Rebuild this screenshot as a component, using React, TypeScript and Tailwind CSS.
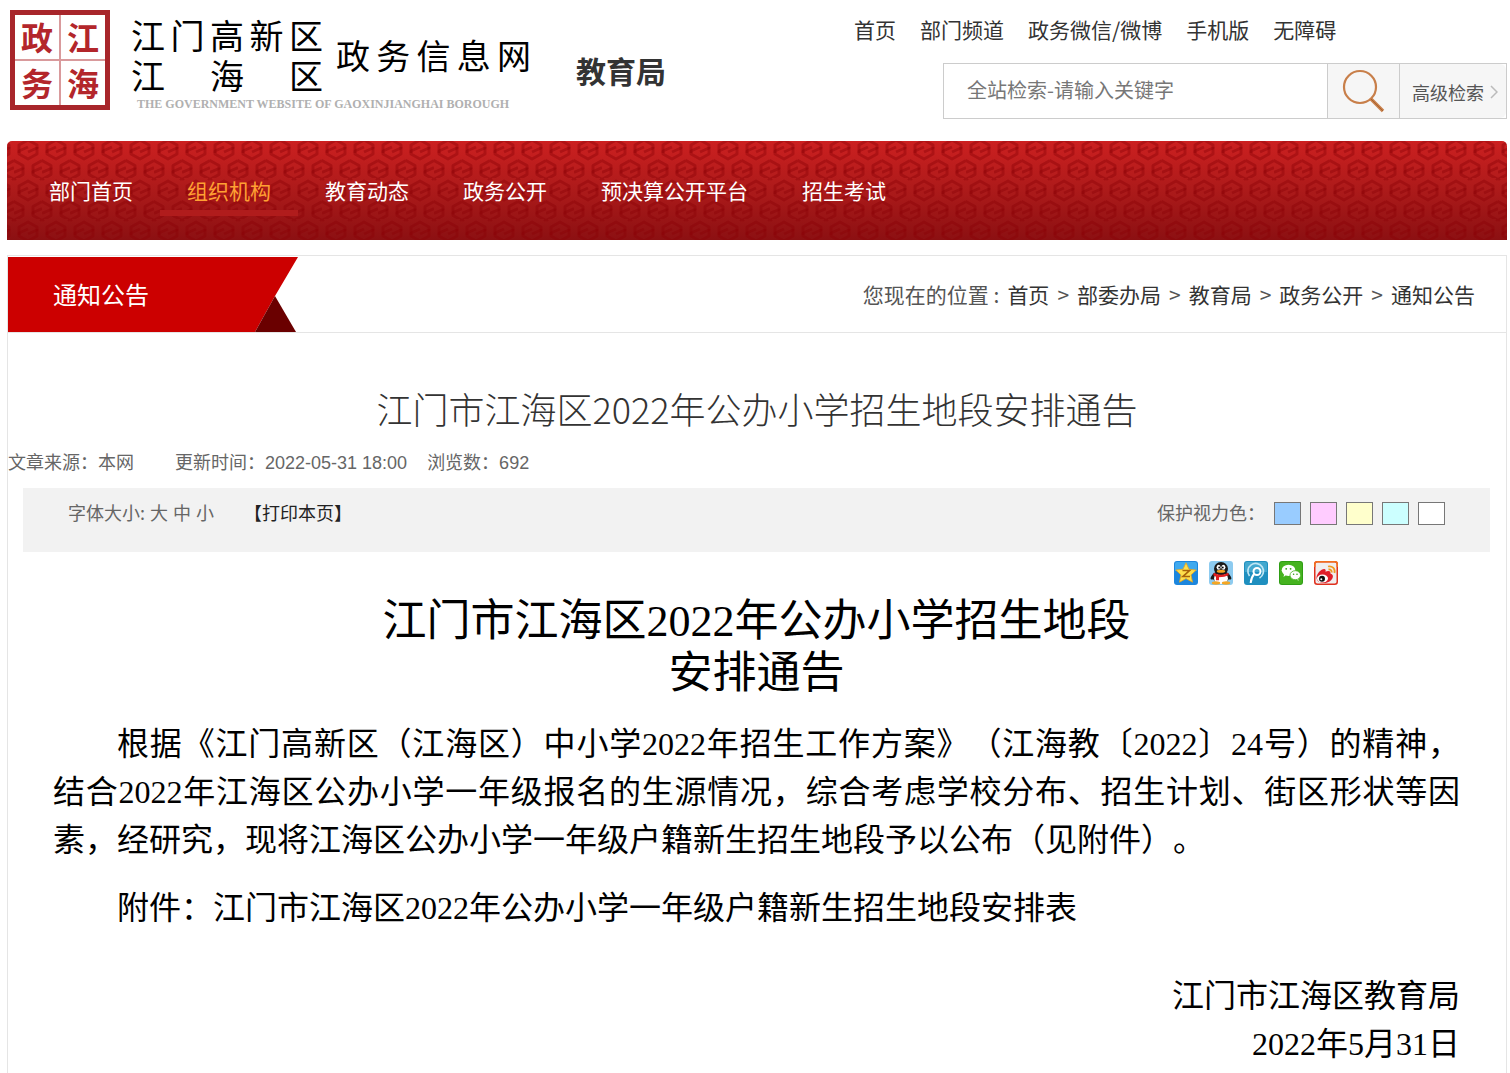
import { Fragment, useState } from "react";

const topLinks = ["首页", "部门频道", "政务微信/微博", "手机版", "无障碍"];

const navLinks = ["部门首页", "组织机构", "教育动态", "政务公开", "预决算公开平台", "招生考试"];

const crumbs = ["首页", "部委办局", "教育局", "政务公开", "通知公告"];

const swatches = [
  { label: "蓝色", className: "bg-[#99ccff]" },
  { label: "粉色", className: "bg-[#ffccff]" },
  { label: "黄色", className: "bg-[#ffffcc]" },
  { label: "青色", className: "bg-[#ccffff]" },
  { label: "白色", className: "bg-white" },
];

const SealLogo = () => (
  <div className="grid size-[100px] shrink-0 grid-cols-2 grid-rows-2 border-[5px] border-[#a8262b] text-center text-[32px] leading-[42px] font-bold text-[#b3262b]">
    <span className="border-r border-b border-[#d99a9c]">政</span>
    <span className="border-b border-l border-[#d99a9c]">江</span>
    <span className="border-t border-r border-[#d99a9c]">务</span>
    <span className="border-t border-l border-[#d99a9c]">海</span>
  </div>
);

// Logo: 两行区名 + 网站名 + 英文名
const SiteName = () => (
  <div className="flex w-[400px] flex-col font-['Liberation_Serif','Noto_Sans_CJK_SC',serif] text-black">
    <div className="flex items-center justify-between text-[34px]">
      <div className="w-[192px] leading-10">
        <div className="flex justify-between">
          {["江", "门", "高", "新", "区"].map((c) => (
            <span key={c}>{c}</span>
          ))}
        </div>
        <div className="flex justify-between">
          {["江", "海", "区"].map((c) => (
            <span key={c}>{c}</span>
          ))}
        </div>
      </div>
      <div className="flex w-[195px] justify-between leading-10">
        {["政", "务", "信", "息", "网"].map((c) => (
          <span key={c}>{c}</span>
        ))}
      </div>
    </div>
    <div className="pl-[6px] text-[12px] leading-3 font-bold whitespace-nowrap text-[#b0b0b0]">
      THE GOVERNMENT WEBSITE OF GAOXINJIANGHAI BOROUGH
    </div>
  </div>
);

const NavPattern = () => (
  <svg className="absolute inset-0 size-full" aria-hidden="true">
    <defs>
      <pattern id="nav-key" width="28" height="41" patternUnits="userSpaceOnUse" patternTransform="translate(7 -4)">
        <g fill="none" stroke="#8a0004" strokeOpacity="0.4" strokeWidth="3" strokeLinejoin="round">
          <path d="M5 16 V8 L14 3 L23 8 V11 L14 15" />
          <path d="M23 10 V17 L14 22 L5 17 V14 L14 10" />
          <path d="M-9 36.500 V28.500 L0 23.500 L9 28.500 V31.500 L0 35.500" />
          <path d="M9 30.500 V37.500 L0 42.500 M0 1.500 L2 .4 M28 1.500 L26 .4" />
          <path d="M19 36.500 V28.500 L28 23.500" />
          <path d="M28 42.500 L19 37.500 V34.500 L28 30.500" />
        </g>
      </pattern>
    </defs>
    <rect width="100%" height="100%" fill="url(#nav-key)" />
  </svg>
);

const QzoneIcon = () => (
  <svg viewBox="0 0 24 24" className="size-6" aria-hidden="true">
    <rect width="24" height="24" rx="3" fill="#1c86dd" />
    <path d="M1 3a2 2 0 0 1 2-2h18a2 2 0 0 1 2 2v7H1z" fill="#3fa9ee" />
    <path
      d="M12 1.800l3 6.400 7.200.9-5.200 4.800 1.500 7.300-6.500-3.600-6.500 3.600L7 13.900 1.800 9.100l7.200-.9z"
      fill="#ffdf4d"
      stroke="#e8a51c"
      strokeWidth=".8"
    />
    <path d="M8.500 9.500h7l-6.500 6h7" fill="none" stroke="#a8620a" strokeWidth="1.700" />
  </svg>
);

const QQIcon = () => (
  <svg viewBox="0 0 24 24" className="size-6" aria-hidden="true">
    <rect width="24" height="24" rx="3" fill="#8dcbf0" />
    <path d="M5 12c-3 3-4.500 6-2.500 6.500S6 17 6 17zM19 12c3 3 4.500 6 2.500 6.500S18 17 18 17z" fill="#1a1a1a" />
    <ellipse cx="12" cy="16" rx="8.500" ry="6.500" fill="#1a1a1a" />
    <ellipse cx="12" cy="17.500" rx="7" ry="5.500" fill="#fff" />
    <ellipse cx="12" cy="7.800" rx="7" ry="6.800" fill="#1a1a1a" />
    <ellipse cx="9.600" cy="6.200" rx="2" ry="2.500" fill="#fff" />
    <ellipse cx="14.400" cy="6.200" rx="2" ry="2.500" fill="#fff" />
    <circle cx="10.200" cy="6.500" r=".9" />
    <circle cx="13.800" cy="6.500" r=".9" />
    <ellipse cx="12" cy="10.300" rx="4.200" ry="1.500" fill="#f5a623" />
    <path d="M4.800 11.800q7.200 4 14.400 0l.5 2.500q-4.200 2-9.700 2v3H7v-3.500l-2.700-1.500z" fill="#e02020" />
    <ellipse cx="7" cy="22" rx="4.200" ry="1.700" fill="#f5a623" />
    <ellipse cx="17" cy="22" rx="4.200" ry="1.700" fill="#f5a623" />
  </svg>
);

const TencentWeiboIcon = () => (
  <svg viewBox="0 0 24 24" className="size-6" aria-hidden="true">
    <rect width="24" height="24" rx="3" fill="#1f8fbf" />
    <path d="M1 3a2 2 0 0 1 2-2h18a2 2 0 0 1 2 2v8H1z" fill="#43a8cf" />
    <path d="M5.500 15a7.800 7.800 0 1 1 10 2" fill="none" stroke="#bfe6f4" strokeWidth="1.700" />
    <circle cx="13" cy="10.500" r="3.500" fill="none" stroke="#fff" strokeWidth="2" />
    <path d="M10.500 12.500q-3.500 4-3.800 9.500" fill="none" stroke="#fff" strokeWidth="2" />
  </svg>
);

const WechatIcon = () => (
  <svg viewBox="0 0 24 24" className="size-6" aria-hidden="true">
    <rect width="24" height="24" rx="3" fill="#2f9e14" />
    <rect x="1" y="1" width="22" height="22" rx="2" fill="#45b31f" />
    <path d="M4.500 16l1-4h4z" fill="#fff" />
    <ellipse cx="9.500" cy="9.300" rx="6.800" ry="5.600" fill="#fff" />
    <path d="M19.500 20l-.5-3.500h-3z" fill="#fff" />
    <ellipse cx="16.300" cy="14.200" rx="5.300" ry="4.500" fill="#fff" stroke="#45b31f" strokeWidth=".8" />
    <circle cx="7.200" cy="7.800" r=".9" fill="#2f9e14" />
    <circle cx="11.600" cy="7.800" r=".9" fill="#2f9e14" />
    <circle cx="14.600" cy="13.200" r=".8" fill="#2f9e14" />
    <circle cx="18" cy="13.200" r=".8" fill="#2f9e14" />
  </svg>
);

const WeiboIcon = () => (
  <svg viewBox="0 0 24 24" className="size-6" aria-hidden="true">
    <rect x=".75" y=".75" width="22.500" height="22.500" rx="2.500" fill="#f0eeee" stroke="#e0301e" strokeWidth="1.500" />
    <path d="M.75 6V3A2.250 2.250 0 0 1 3 .75h18A2.250 2.250 0 0 1 23.250 3v3" fill="none" stroke="#f2701c" strokeWidth="1.500" />
    <path
      d="M2.500 16.500c0-4 5-9 8-8.600 1.500.3 1.300 1.800.9 2.900 2.500-1.200 5.800-1 5 1.800 2.500.7 3 2.400 2.200 4.400-1.200 3-5.100 5-9 5-4.100 0-7.100-2.300-7.100-5.500z"
      fill="#e01f2a"
    />
    <ellipse cx="8.500" cy="17.500" rx="5.500" ry="4" fill="#fff" />
    <circle cx="8" cy="17.700" r="3" fill="#111" />
    <circle cx="7.300" cy="18.200" r="1" fill="#fff" />
    <path d="M14 5.500c4-1 7.500 2 6.500 6.500M14.500 8.500c2-.4 3.600 1 3.100 3" fill="none" stroke="#f29a1f" strokeWidth="1.800" />
  </svg>
);

const shares = [
  { label: "QQ空间", Icon: QzoneIcon },
  { label: "QQ好友", Icon: QQIcon },
  { label: "腾讯微博", Icon: TencentWeiboIcon },
  { label: "微信", Icon: WechatIcon },
  { label: "新浪微博", Icon: WeiboIcon },
];

const App = () => {
  const [keyword, setKeyword] = useState("");

  return (
    <div
      lang="zh-CN"
      className="flex min-h-screen flex-col bg-white pr-[3px] pl-[7px] font-['Noto_Sans_CJK_SC',sans-serif] text-[#333] [text-spacing-trim:space-all]"
    >
      {/* Header */}
      <header className="flex h-[141px] items-start justify-between">
        <div className="flex pt-[10px] pl-[3px]">
          <SealLogo />
          <div className="pt-2 pl-[21px]">
            <SiteName />
          </div>
          <div className="pt-10 pl-[45px] text-[30px] leading-10 font-bold">教育局</div>
        </div>

        <div className="w-[653px]">
          <div className="flex gap-6 pt-[13px] text-[21px] leading-8">
            {topLinks.map((label) => (
              <a key={label} href="#" className="hover:underline">
                {label}
              </a>
            ))}
          </div>
          <form
            className="mt-[18px] ml-[89px] flex h-14 border border-[#ccc]"
            onSubmit={(e) => e.preventDefault()}
          >
            <input
              type="text"
              aria-label="全站检索"
              placeholder="全站检索-请输入关键字"
              value={keyword}
              onChange={(e) => setKeyword(e.target.value)}
              className="min-w-0 flex-1 pb-[2px] pl-[23px] text-[20px] outline-none placeholder:text-[#777]"
            />
            <button type="submit" aria-label="搜索" className="w-[72px] border-l border-[#ccc] bg-[#f6f6f6] pl-3">
              <svg viewBox="0 0 48 48" className="size-12" fill="none" stroke="#c87f4a" aria-hidden="true">
                <circle cx="20" cy="20" r="16" strokeWidth="2.200" />
                <path d="M31 32 L43 44" strokeWidth="3.400" />
                <path d="M31 32 L43 44" stroke="#a8622e" strokeWidth="1" />
              </svg>
            </button>
            <a
              href="#"
              className="flex w-[107px] items-center gap-[6px] rounded-r-md border-l border-[#ccc] bg-[#f6f6f6] pt-[2px] pl-3 text-[18px] text-[#555]"
            >
              高级检索
              <svg viewBox="0 0 8 14" className="h-[14px] w-2" fill="none" stroke="#bbb" strokeWidth="1.500" aria-hidden="true">
                <path d="M1 1 L7 7 L1 13" />
              </svg>
            </a>
          </form>
        </div>
      </header>

      {/* Nav */}
      <nav className="relative h-[99px] overflow-hidden rounded-t-[5px] bg-linear-to-b from-[#cc2020] via-[#ac1a1a] to-[#8c1012]">
        <NavPattern />
        <div className="relative flex pt-8 pl-[15px] text-[21px]">
          {navLinks.map((label, i) => (
            <a
              key={label}
              href="#"
              className={
                i === 1
                  ? "border-b-6 border-[#b01c1c] px-[27px] pb-[2px] leading-[35px] text-[#ffa033]"
                  : "border-b-6 border-transparent px-[27px] pb-[2px] leading-[35px] text-white"
              }
            >
              {label}
            </a>
          ))}
        </div>
      </nav>

      <main className="mt-[15px] flex-1 border border-b-0 border-[#e5e5e5]">
        {/* Ribbon + breadcrumb */}
        <div className="relative flex items-center justify-between border-b border-[#e5e5e5] pt-px pr-[31px] pl-[45px]">
          <svg viewBox="0 0 290 75" className="absolute top-px left-0 h-[75px] w-[290px]" aria-hidden="true">
            <path d="M0 0 H290 L267 39 L247 75 H0 Z" fill="#c00" />
            <path d="M267 39 L288 75 H247 Z" fill="#6a0000" />
          </svg>
          <h2 className="relative pb-[2px] text-[24px] leading-[73px] text-white">通知公告</h2>
          <div className="flex text-[21px] text-[#555]">
            <span className="mr-2">您现在的位置 :</span>
            {crumbs.map((label, i) => (
              <Fragment key={label}>
                {i > 0 && <span className="mx-2">&gt;</span>}
                <a href="#" className="text-[#333] hover:underline">
                  {label}
                </a>
              </Fragment>
            ))}
          </div>
        </div>

        <h1 className="pt-12 text-center text-[36px] leading-[54px] font-light">
          江门市江海区2022年公办小学招生地段安排通告
        </h1>

        <div className="mt-[14px] flex font-['Liberation_Sans','Noto_Sans_CJK_SC',sans-serif] text-[18px] leading-7 text-[#666]">
          <span className="mr-[41px]">文章来源：本网</span>
          <span className="mr-5">更新时间：2022-05-31 18:00</span>
          <span>浏览数：692</span>
        </div>

        {/* Toolbar */}
        <div className="mt-[11px] mr-4 ml-[15px] flex items-start justify-between bg-[#f2f2f2] px-[45px] pb-4 text-[18px] leading-[48px] text-[#666]">
          <div className="flex">
            <span className="mr-[5px]">字体大小:</span>
            <div className="mr-[30px] flex gap-[5px]">
              <button type="button">大</button>
              <button type="button">中</button>
              <button type="button">小</button>
            </div>
            <button type="button" className="text-[#222]" onClick={() => window.print()}>
              【打印本页】
            </button>
          </div>
          <div className="flex gap-[9px]">
            <span>保护视力色：</span>
            {swatches.map((s) => (
              <button
                key={s.label}
                type="button"
                aria-label={s.label}
                className={"mt-[14px] h-[23px] w-[27px] border border-[#777] " + s.className}
              />
            ))}
          </div>
        </div>

        {/* Share */}
        <div className="mt-[9px] flex justify-end gap-[11px] pr-[168px]">
          {shares.map(({ label, Icon }) => (
            <a key={label} href="#" aria-label={label}>
              <Icon />
            </a>
          ))}
        </div>

        <article className="pt-[11px] pr-[46px] pl-[45px] font-['Liberation_Serif','Noto_Sans_CJK_SC',serif] text-[32px] leading-[48px] text-black">
          <h2 className="text-center text-[44px] leading-[52px]">
            江门市江海区2022年公办小学招生地段
            <br />
            安排通告
          </h2>
          <p className="mt-5 text-justify indent-16">
            根据《江门高新区（江海区）中小学2022年招生工作方案》（江海教〔2022〕24号）的精神，结合2022年江海区公办小学一年级报名的生源情况，综合考虑学校分布、招生计划、街区形状等因素，经研究，现将江海区公办小学一年级户籍新生招生地段予以公布（见附件）。
          </p>
          <p className="mt-5 indent-16">附件：江门市江海区2022年公办小学一年级户籍新生招生地段安排表</p>
          <p className="mt-10 text-right">江门市江海区教育局</p>
          <p className="text-right">2022年5月31日</p>
        </article>
      </main>
    </div>
  );
};

export default App;
